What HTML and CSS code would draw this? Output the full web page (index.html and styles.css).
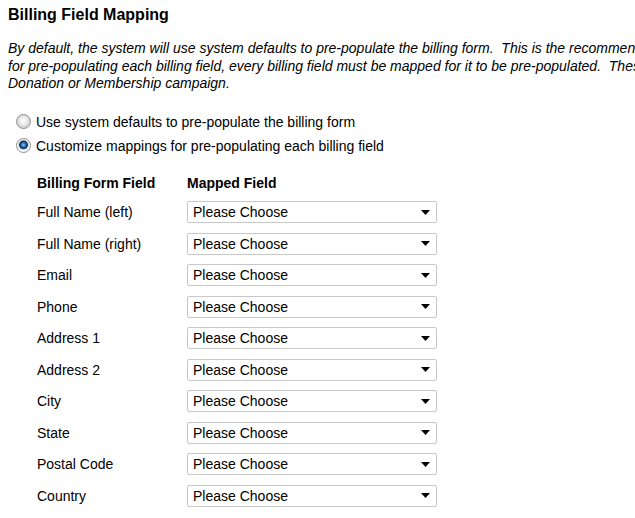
FILE: index.html
```html
<!DOCTYPE html>
<html>
<head>
<meta charset="utf-8">
<link rel="stylesheet" href="styles.css">
</head>
<body>
<div class="page">
  <h2 class="title">Billing Field Mapping</h2>
  <p class="intro">By default, the system will use system defaults to pre-populate the billing form.&nbsp; This is the recommended setting.&nbsp; If you choose to customize mappings<br>for pre-populating each billing field, every billing field must be mapped for it to be pre-populated.&nbsp; These settings apply to every billing form in this<br>Donation or Membership campaign.</p>

  <div class="options">
    <label class="option"><input type="radio" name="mode" class="radio"><span>Use system defaults to pre-populate the billing form</span></label>
    <label class="option"><input type="radio" name="mode" class="radio" checked><span>Customize mappings for pre-populating each billing field</span></label>
  </div>

  <div class="mapping">
    <div class="head">Billing Form Field</div>
    <div class="head">Mapped Field</div>

    <div class="label">Full Name (left)</div>
    <div class="select"><span>Please Choose</span><svg class="arrow" width="9" height="5" viewBox="0 0 9 5"><path d="M0 0H9L4.5 5Z"/></svg></div>

    <div class="label">Full Name (right)</div>
    <div class="select"><span>Please Choose</span><svg class="arrow" width="9" height="5" viewBox="0 0 9 5"><path d="M0 0H9L4.5 5Z"/></svg></div>

    <div class="label">Email</div>
    <div class="select"><span>Please Choose</span><svg class="arrow" width="9" height="5" viewBox="0 0 9 5"><path d="M0 0H9L4.5 5Z"/></svg></div>

    <div class="label">Phone</div>
    <div class="select"><span>Please Choose</span><svg class="arrow" width="9" height="5" viewBox="0 0 9 5"><path d="M0 0H9L4.5 5Z"/></svg></div>

    <div class="label">Address 1</div>
    <div class="select"><span>Please Choose</span><svg class="arrow" width="9" height="5" viewBox="0 0 9 5"><path d="M0 0H9L4.5 5Z"/></svg></div>

    <div class="label">Address 2</div>
    <div class="select"><span>Please Choose</span><svg class="arrow" width="9" height="5" viewBox="0 0 9 5"><path d="M0 0H9L4.5 5Z"/></svg></div>

    <div class="label">City</div>
    <div class="select"><span>Please Choose</span><svg class="arrow" width="9" height="5" viewBox="0 0 9 5"><path d="M0 0H9L4.5 5Z"/></svg></div>

    <div class="label">State</div>
    <div class="select"><span>Please Choose</span><svg class="arrow" width="9" height="5" viewBox="0 0 9 5"><path d="M0 0H9L4.5 5Z"/></svg></div>

    <div class="label">Postal Code</div>
    <div class="select"><span>Please Choose</span><svg class="arrow" width="9" height="5" viewBox="0 0 9 5"><path d="M0 0H9L4.5 5Z"/></svg></div>

    <div class="label">Country</div>
    <div class="select"><span>Please Choose</span><svg class="arrow" width="9" height="5" viewBox="0 0 9 5"><path d="M0 0H9L4.5 5Z"/></svg></div>
  </div>
</div>
</body>
</html>
```

FILE: styles.css
```css
html, body {
  margin: 0;
  padding: 0;
  background: #fff;
  overflow: hidden;
}

.page {
  padding: 0 8px;
  font-family: "Liberation Sans", Arial, sans-serif;
  font-size: 14px;
  color: #000;
}

.title {
  margin: 5px 0 0;
  font-size: 16px;
  line-height: 19px;
  font-weight: bold;
}

.intro {
  margin: 16px 0 0;
  font-style: italic;
  line-height: 17.5px;
  white-space: nowrap;
}

.options {
  margin-top: 17px;
  display: flex;
  flex-direction: column;
}

.option {
  display: flex;
  align-items: center;
  height: 24px;
}

.radio {
  appearance: none;
  -webkit-appearance: none;
  width: 15px;
  height: 15px;
  margin: 0 5px 0 8px;
  border: 1px solid #8e8f8f;
  border-radius: 50%;
  box-sizing: border-box;
  background: radial-gradient(circle at 50% 45%, #ffffff 0, #f0f0f0 3px, #d4d4d4 6.5px);
}

.radio:checked {
  background: radial-gradient(circle at 50% 45%, #9fd0f5 0, #3d86c6 1.5px, #103f76 3.5px, #1a2f4a 4px, #e6e6e6 4.8px, #f8f8f8 6.5px);
}

.mapping {
  margin: 12px 0 0 29px;
  display: grid;
  grid-template-columns: 150px 250px;
  grid-template-rows: 27px;
  grid-auto-rows: 31.5px;
  align-items: center;
}

.head {
  font-weight: bold;
}

.label {
  line-height: 16px;
}

.select {
  height: 22px;
  box-sizing: border-box;
  border: 1px solid #c8c8c8;
  border-radius: 2px;
  padding: 0 6px 0 5px;
  display: flex;
  align-items: center;
  justify-content: space-between;
  background: #fff;
}

.arrow {
  fill: #000;
}
```
